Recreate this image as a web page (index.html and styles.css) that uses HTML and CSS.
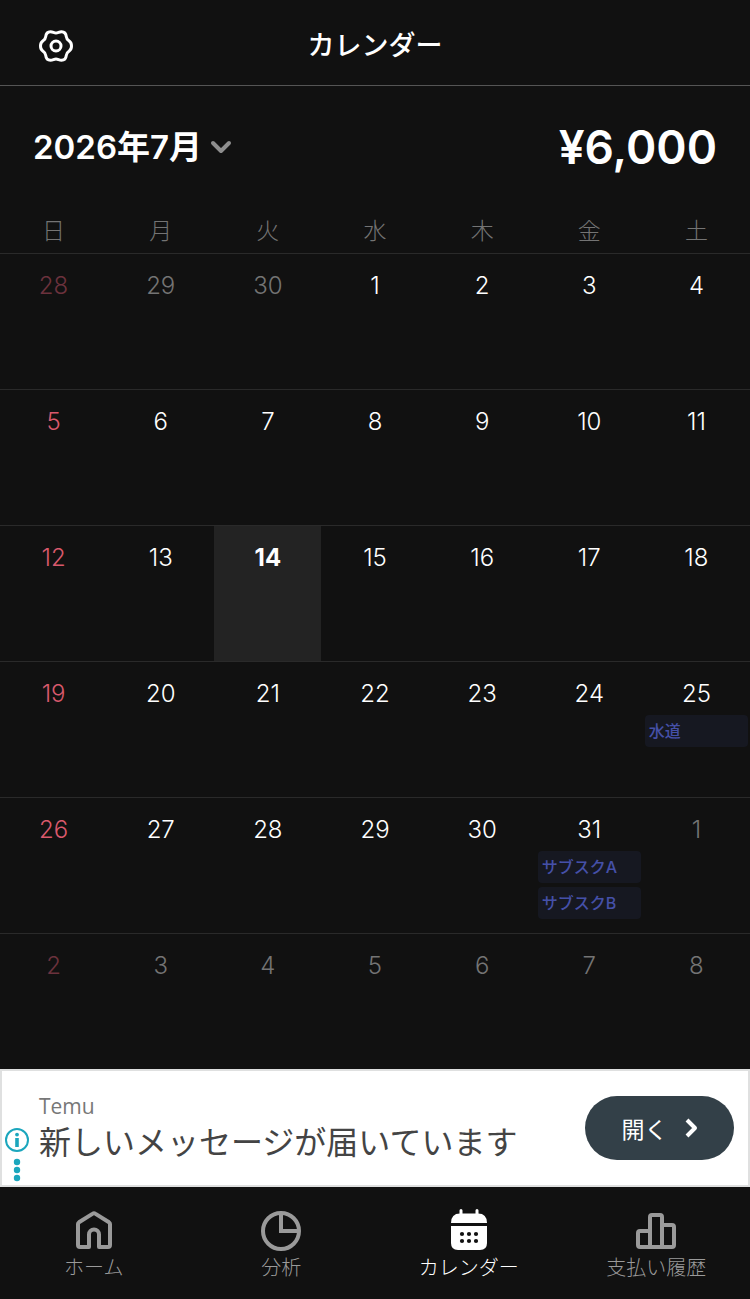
FILE: index.html
```html
<!DOCTYPE html>
<html lang="ja">
<head>
  <meta charset="UTF-8">
  <meta name="viewport" content="width=device-width, initial-scale=1.0">
  <title>カレンダー</title>
  <link rel="stylesheet" href="styles.css">
</head>
<body>
  <!-- Header -->
  <header class="app-header">
    <button class="icon-btn" type="button" aria-label="設定">
      <svg width="36" height="36" viewBox="0 0 36 36" fill="none" stroke="#fff" stroke-width="3" stroke-linejoin="round">
        <path d="M18 5 C20 5 21.2 3.7 23.5 3.7 C26.3 3.7 28 5.8 28.3 8.6 C28.5 11 29.4 11.8 31.2 13 C33.2 14.4 33.5 16 33.5 18 C33.5 20 33.2 21.6 31.2 23 C29.4 24.2 28.5 25 28.3 27.4 C28 30.2 26.3 32.3 23.5 32.3 C21.2 32.3 20 31 18 31 C16 31 14.8 32.3 12.5 32.3 C9.7 32.3 8 30.2 7.7 27.4 C7.5 25 6.6 24.2 4.8 23 C2.8 21.6 2.5 20 2.5 18 C2.5 16 2.8 14.4 4.8 13 C6.6 11.8 7.5 11 7.7 8.6 C8 5.8 9.7 3.7 12.5 3.7 C14.8 3.7 16 5 18 5 Z"/>
        <circle cx="18" cy="18" r="5"/>
      </svg>
    </button>
    <h1 class="app-title">カレンダー</h1>
  </header>

  <main class="main">
    <!-- Month and total -->
    <div class="summary">
      <button class="month-btn" type="button">
        <span>2026年7月</span>
        <svg width="22" height="14" viewBox="0 0 22 14" fill="none" stroke="#8e8e8e" stroke-width="4" stroke-linecap="round" stroke-linejoin="round">
          <path d="M3 3 L11 11 L19 3"/>
        </svg>
      </button>
      <span class="total">¥6,000</span>
    </div>

    <!-- Calendar -->
    <table class="calendar">
      <thead>
        <tr><th>日</th><th>月</th><th>火</th><th>水</th><th>木</th><th>金</th><th>土</th></tr>
      </thead>
      <tbody>
        <tr>
          <td class="out">28</td><td class="out">29</td><td class="out">30</td><td>1</td><td>2</td><td>3</td><td>4</td>
        </tr>
        <tr>
          <td>5</td><td>6</td><td>7</td><td>8</td><td>9</td><td>10</td><td>11</td>
        </tr>
        <tr>
          <td>12</td><td>13</td><td class="today">14</td><td>15</td><td>16</td><td>17</td><td>18</td>
        </tr>
        <tr>
          <td>19</td><td>20</td><td>21</td><td>22</td><td>23</td><td>24</td>
          <td>25
            <div class="event">水道</div>
          </td>
        </tr>
        <tr>
          <td>26</td><td>27</td><td>28</td><td>29</td><td>30</td>
          <td>31
            <div class="event">サブスクA</div>
            <div class="event">サブスクB</div>
          </td>
          <td class="out">1</td>
        </tr>
        <tr>
          <td class="out">2</td><td class="out">3</td><td class="out">4</td><td class="out">5</td><td class="out">6</td><td class="out">7</td><td class="out">8</td>
        </tr>
      </tbody>
    </table>
  </main>

  <!-- Ad banner -->
  <aside class="ad">
    <div class="ad-marks">
      <svg width="24" height="54" viewBox="0 0 24 54" fill="#1ba6bd">
        <circle cx="12" cy="12" r="11" fill="none" stroke="#1ba6bd" stroke-width="2"/>
        <circle cx="12" cy="6.6" r="1.9"/>
        <path d="M10.2 10 H13.8 V19 H10.2 Z"/>
        <circle cx="12" cy="34" r="3.2"/>
        <circle cx="12" cy="42" r="3.2"/>
        <circle cx="12" cy="50" r="3.2"/>
      </svg>
    </div>
    <div class="ad-text">
      <span class="ad-brand">Temu</span>
      <span class="ad-message">新しいメッセージが届いています</span>
    </div>
    <button class="ad-btn" type="button">
      開く
      <svg width="14" height="20" viewBox="0 0 14 20" fill="none" stroke="#fff" stroke-width="4" stroke-linejoin="round">
        <path d="M3 2 L11 10 L3 18"/>
      </svg>
    </button>
  </aside>

  <!-- Tab bar -->
  <nav class="tabs">
    <a class="tab" href="#home">
      <svg width="40" height="42" viewBox="0 0 40 42" fill="none" stroke="currentColor" stroke-width="4" stroke-linejoin="round">
        <path d="M4 15 Q4 14 5 13.3 L18.8 4.6 Q20 3.8 21.2 4.6 L35 13.3 Q36 14 36 15 V36 Q36 38 34 38 H25 V25.5 A5 5 0 0 0 15 25.5 V38 H6 Q4 38 4 36 Z"/>
      </svg>
      <span>ホーム</span>
    </a>
    <a class="tab" href="#analysis">
      <svg width="40" height="42" viewBox="0 0 40 42" fill="none" stroke="currentColor" stroke-width="4">
        <circle cx="20" cy="22" r="18"/>
        <path d="M20 4 V22 H38"/>
      </svg>
      <span>分析</span>
    </a>
    <a class="tab active" href="#calendar">
      <svg width="40" height="42" viewBox="0 0 40 42" fill="currentColor">
        <path d="M12 1.5 V6 M28 1.5 V6" stroke="currentColor" stroke-width="3" stroke-linecap="round"/>
        <path d="M2 14 Q2 4.5 11 4.5 H29 Q38 4.5 38 14 Z"/>
        <path d="M2 17 H38 V34 Q38 41 31 41 H9 Q2 41 2 34 Z"/>
        <g fill="#111">
          <circle cx="13" cy="25" r="2.1"/><circle cx="20" cy="25" r="2.1"/><circle cx="27" cy="25" r="2.1"/>
          <circle cx="13" cy="32" r="2.1"/><circle cx="20" cy="32" r="2.1"/><circle cx="27" cy="32" r="2.1"/>
        </g>
      </svg>
      <span>カレンダー</span>
    </a>
    <a class="tab" href="#history">
      <svg width="40" height="42" viewBox="0 0 40 42" fill="none" stroke="currentColor" stroke-width="4" stroke-linejoin="round">
        <path d="M14 38 V8 Q14 6 16 6 H24 Q26 6 26 8 V38"/>
        <path d="M14 22 H4 Q2 22 2 24 V36 Q2 38 4 38 H36 Q38 38 38 36 V18 Q38 16 36 16 H26"/>
      </svg>
      <span>支払い履歴</span>
    </a>
  </nav>
</body>
</html>
```
FILE: styles.css
```css
* {
  box-sizing: border-box;
}
body {
  margin: 0;
  min-height: 100vh;
  display: flex;
  flex-direction: column;
  background: #111;
  color: #fff;
  font-family: Inter, 'Noto Sans CJK JP', sans-serif;
}
button {
  background: none;
  border: none;
  padding: 0;
  color: inherit;
  font: inherit;
  cursor: pointer;
}
svg {
  display: block;
  flex: none;
}
/* Header */
.app-header {
  display: grid;
  grid-template-columns: 36px 1fr 36px;
  align-items: center;
  padding: 19px 38px 18px;
  border-bottom: 1px solid #555;
}
.icon-btn {
  padding-top: 6px;
}
.app-title {
  margin: 0;
  padding-top: 6px;
  font-size: 27px;
  line-height: 42px;
  font-weight: 500;
  text-align: center;
}
/* Month and total */
.main {
  flex: 1;
}
.summary {
  display: flex;
  align-items: center;
  justify-content: space-between;
  padding: 33px 33px;
}
.month-btn {
  display: flex;
  align-items: center;
  gap: 8px;
  font-size: 33px;
  line-height: 52px;
  font-weight: 600;
}
.total {
  font-size: 46px;
  line-height: 56px;
  font-weight: 600;
}
/* Calendar */
.calendar {
  width: 100%;
  table-layout: fixed;
  border-collapse: separate;
  border-spacing: 0;
}
.calendar th {
  height: 45px;
  padding: 0;
  color: #747474;
  font-size: 23px;
  line-height: 32px;
  font-weight: 300;
}
.calendar td {
  height: 136px;
  padding: 16px 2px 0;
  border-top: 1px solid #2a2a2a;
  font-size: 24px;
  line-height: 32px;
  font-weight: 300;
  text-align: center;
  vertical-align: top;
}
.calendar td:first-child {
  color: #d9596c;
}
.calendar td.out {
  color: #747474;
}
.calendar td.out:first-child {
  color: #6c323d;
}
.calendar td.today {
  background: #232323;
  font-weight: 700;
}
.event {
  margin: 4px 0;
  padding: 0 4px;
  border-radius: 4px;
  background: #161821;
  color: #4550a8;
  font-size: 16px;
  line-height: 32px;
  font-weight: 500;
  text-align: left;
  white-space: nowrap;
  overflow: hidden;
}
.event:first-child {
  margin-top: 5px;
}
/* Ad banner */
.ad {
  display: flex;
  align-items: center;
  height: 118px;
  padding: 0 14px 0 3px;
  border: 2px solid #dfe0e0;
  background: #fff;
}
.ad-marks {
  align-self: flex-end;
  padding-bottom: 3px;
}
.ad-text {
  flex: 1;
  display: flex;
  flex-direction: column;
  padding-left: 10px;
}
.ad-brand {
  color: #777;
  font-family: 'Open Sans', sans-serif;
  font-size: 21px;
  line-height: 30px;
}
.ad-message {
  color: #444;
  font-size: 32px;
  line-height: 44px;
}
.ad-btn {
  display: flex;
  align-items: center;
  justify-content: center;
  gap: 16px;
  width: 149px;
  height: 64px;
  border-radius: 32px;
  background: #334048;
  color: #fff;
  font-size: 23px;
  font-weight: 400;
}
/* Tab bar */
.tabs {
  display: grid;
  grid-template-columns: repeat(4, 1fr);
  height: 112px;
  padding-top: 22px;
}
.tab {
  display: flex;
  flex-direction: column;
  align-items: center;
  color: #9a9a9a;
  font-size: 20px;
  line-height: 34px;
  font-weight: 300;
  text-decoration: none;
}
.tab.active {
  color: #fff;
}
```
